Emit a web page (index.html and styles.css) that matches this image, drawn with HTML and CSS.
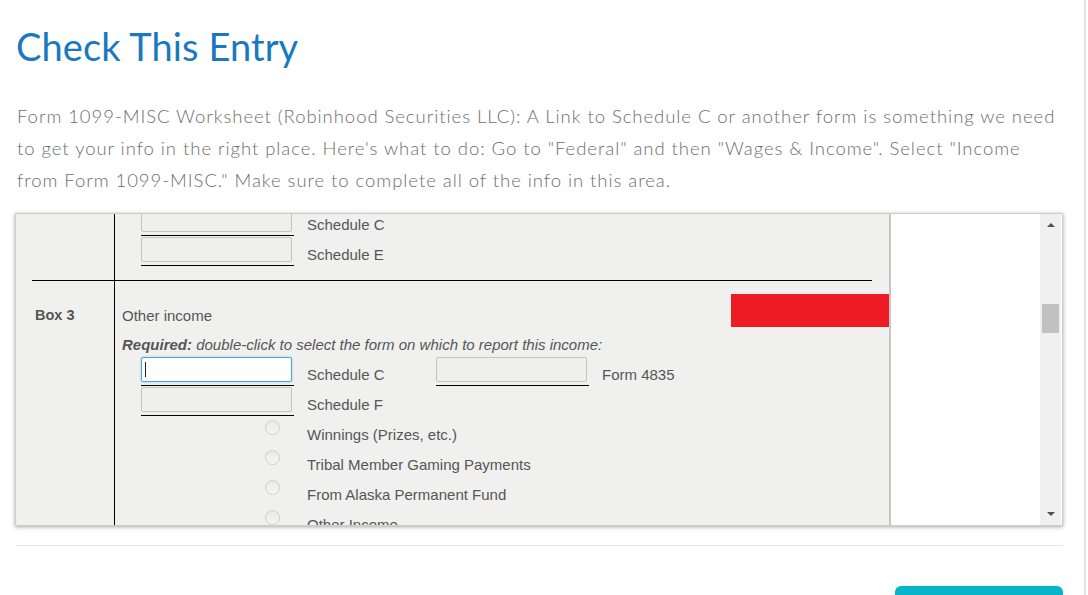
FILE: index.html
```html
<!DOCTYPE html>
<html lang="en">
<head>
<meta charset="utf-8">
<title>Check This Entry</title>
<link rel="stylesheet" href="styles.css">
</head>
<body>
<div class="shell">
  <div class="page">
    <h1 class="title">Check This Entry</h1>
    <p class="intro">Form 1099-MISC Worksheet (Robinhood Securities LLC): A Link to Schedule C or another form is something we need to get your info in the right place. Here's what to do: Go to "Federal" and then "Wages &amp; Income". Select "Income from Form 1099-MISC." Make sure to complete all of the info in this area.</p>

    <div class="frame">
      <div class="sheet">
        <div class="sheet-content">
          <div class="section">
            <div class="col-key"></div>
            <div class="col-body sec-a">
              <div class="row">
                <div class="field"><div class="input"></div></div>
                <span class="lbl">Schedule C</span>
              </div>
              <div class="row">
                <div class="field"><div class="input"></div></div>
                <span class="lbl">Schedule E</span>
              </div>
            </div>
          </div>
          <div class="divider"></div>
          <div class="section sec-b">
            <div class="col-key"><span class="box-no">Box 3</span></div>
            <div class="col-body">
              <div class="line">Other income</div>
              <div class="line req"><b>Required:</b> double-click to select the form on which to report this income:</div>
              <div class="row">
                <div class="field"><div class="input focused"><span class="caret"></span></div></div>
                <span class="lbl wide">Schedule C</span>
                <div class="field"><div class="input"></div></div>
                <span class="lbl">Form 4835</span>
              </div>
              <div class="row">
                <div class="field"><div class="input"></div></div>
                <span class="lbl">Schedule F</span>
              </div>
              <div class="row">
                <div class="radio-slot"><span class="radio"></span></div>
                <span class="lbl">Winnings (Prizes, etc.)</span>
              </div>
              <div class="row">
                <div class="radio-slot"><span class="radio"></span></div>
                <span class="lbl">Tribal Member Gaming Payments</span>
              </div>
              <div class="row">
                <div class="radio-slot"><span class="radio"></span></div>
                <span class="lbl">From Alaska Permanent Fund</span>
              </div>
              <div class="row">
                <div class="radio-slot"><span class="radio"></span></div>
                <span class="lbl">Other Income</span>
              </div>
            </div>
            <div class="redact"></div>
          </div>
        </div>
      </div>
      <div class="side"></div>
      <div class="vscroll">
        <div class="arrow up"></div>
        <div class="track"><div class="thumb"></div></div>
        <div class="arrow down"></div>
      </div>
    </div>

    <div class="rule"></div>
    <div class="actions"><button class="continue" type="button"></button></div>
  </div>
</div>
</body>
</html>
```

FILE: styles.css
```css
html, body {
  margin: 0;
  padding: 0;
  background: #fff;
  overflow: hidden;
}

.shell {
  width: 1084px;
  height: 595px;
  border-right: 2px solid #e2e2e2;
  overflow: hidden;
}

.page {
  width: 1048px;
  padding-left: 15px;
}

.title {
  margin: 22px 0 0 1px;
  font-family: Lato, "Open Sans", sans-serif;
  font-weight: 400;
  font-size: 38px;
  line-height: 48px;
  color: #1a78c0;
  letter-spacing: 0.1px;
}

.intro {
  margin: 30px 0 0 2px;
  width: 1045px;
  font-family: Lato, "Open Sans", sans-serif;
  font-weight: 300;
  font-size: 18.5px;
  line-height: 32px;
  color: #6e6e6e;
  letter-spacing: 0.95px;
}

/* worksheet frame */
.frame {
  margin-top: 17px;
  height: 313px;
  box-sizing: border-box;
  border: 1px solid #cdcdcd;
  box-shadow: 0 1px 4px rgba(0, 0, 0, 0.35);
  display: flex;
  background: #fff;
}

.sheet {
  width: 875px;
  flex: none;
  box-sizing: border-box;
  border-right: 2px solid #c6c6c6;
  background: #f0f0ef;
  overflow: hidden;
  font-family: "Liberation Sans", Arial, sans-serif;
  color: #565656;
  font-size: 15px;
}

.sheet-content {
  margin-top: -7px;
}

.section {
  display: flex;
  position: relative;
}

.col-key {
  width: 98px;
  flex: none;
}

.col-body {
  flex: 1;
  border-left: 1px solid #000;
  padding-left: 26px;
}

.sec-a {
  padding-bottom: 13px;
}

.sec-b .col-key,
.sec-b .col-body {
  padding-top: 20px;
}

.divider {
  height: 1px;
  background: #000;
  margin: 0 17px 0 16px;
}

.box-no {
  display: block;
  padding-left: 19px;
  font-weight: 700;
  font-size: 14.5px;
  line-height: 29px;
  color: #555;
}

.line {
  line-height: 29px;
  font-size: 15px;
  margin-left: -19px;
}

.req {
  font-style: italic;
  line-height: 24px;
  padding-top: 3px;
}

.req b {
  font-weight: 700;
}

.row {
  display: flex;
  height: 30px;
  align-items: flex-start;
}

.field {
  width: 153px;
  flex: none;
  padding-bottom: 3px;
  border-bottom: 1px solid #000;
}

.input {
  width: 151px;
  height: 25px;
  box-sizing: border-box;
  border: 1px solid #c4c4c4;
  border-radius: 2px;
  background: #efefee;
}

.input.focused {
  background: #fff;
  border: 1px solid #4aa9dc;
  box-shadow: 0 0 2px rgba(74, 169, 220, 0.6);
  display: flex;
  align-items: center;
  padding-left: 3px;
}

.caret {
  width: 1px;
  height: 15px;
  background: #222;
}

.lbl {
  margin-left: 13px;
  line-height: 24px;
  padding-top: 6px;
  white-space: nowrap;
}

.lbl.wide {
  width: 129px;
  flex: none;
}

.radio-slot {
  width: 153px;
  flex: none;
}

.radio {
  display: block;
  width: 15px;
  height: 15px;
  margin: 3px 0 0 124px;
  box-sizing: border-box;
  border-radius: 50%;
  border: 1px solid #cfcfcf;
  background: linear-gradient(#e9e9e9, #f5f5f5);
}

.redact {
  position: absolute;
  top: 13px;
  left: 715px;
  width: 158px;
  height: 33px;
  background: #ed1c24;
}

.side {
  width: 149px;
  flex: none;
  background: #fff;
}

.vscroll {
  width: 21px;
  flex: none;
  background: #f0f0f0;
  display: flex;
  flex-direction: column;
}

.arrow {
  height: 22px;
  flex: none;
  display: flex;
  align-items: center;
  justify-content: center;
}

.arrow::before {
  content: "";
  width: 0;
  height: 0;
  border-left: 4px solid transparent;
  border-right: 4px solid transparent;
}

.arrow.up::before {
  border-bottom: 4px solid #505050;
}

.arrow.down::before {
  border-top: 4px solid #505050;
}

.track {
  flex: 1;
}

.thumb {
  margin: 68px 2px 0 2px;
  height: 29px;
  background: #c1c1c1;
}

.rule {
  margin-top: 19px;
  height: 1px;
  background: #e8e8e8;
  margin-left: 1px;
}

.actions {
  display: flex;
  justify-content: flex-end;
  margin-top: 40px;
}

.continue {
  width: 168px;
  height: 48px;
  border: none;
  border-radius: 6px;
  background: #07b4c8;
  padding: 0;
}
```
